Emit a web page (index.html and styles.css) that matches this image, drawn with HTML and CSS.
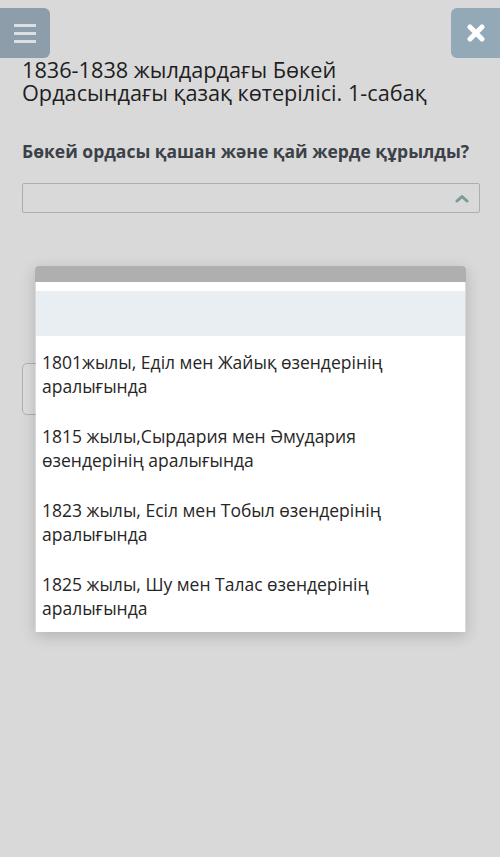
FILE: index.html
```html
<!DOCTYPE html>
<html lang="kk">
<head>
  <meta charset="UTF-8">
  <title>Бөкей ордасы</title>
  <link rel="stylesheet" href="styles.css">
</head>
<body>

<div class="topbar">
  <button class="menu-btn">
    <svg width="22" height="20" viewBox="0 0 22 20">
      <rect x="0" y="1" width="22" height="3" fill="#d9e0e5"/>
      <rect x="0" y="9" width="22" height="3" fill="#d9e0e5"/>
      <rect x="0" y="17" width="22" height="3" fill="#d9e0e5"/>
    </svg>
  </button>
  <button class="close-btn">
    <svg width="18" height="18" viewBox="0 0 18 18">
      <path d="M3 3 L15 15 M15 3 L3 15" stroke="#fff" stroke-width="5" stroke-linecap="round"/>
    </svg>
  </button>
</div>

<h1 class="title">1836-1838 жылдардағы Бөкей Ордасындағы қазақ көтерілісі. 1-сабақ</h1>

<div class="question">
  <h3>Бөкей ордасы қашан және қай жерде құрылды?</h3>
  <div class="select">
    <svg class="chevron" width="14" height="9" viewBox="0 0 14 9">
      <path d="M2 7 L7 2.5 L12 7" stroke="#7b9999" stroke-width="3" fill="none" stroke-linecap="round" stroke-linejoin="round"/>
    </svg>
  </div>
</div>

<div class="actions">
  <button class="next-btn"></button>
</div>

<!-- open list of answers -->
<div class="dropdown">
  <div class="dropdown-head"></div>
  <div class="dropdown-list">
    <div class="option selected"></div>
    <div class="option">1801жылы, Еділ мен Жайық өзендерінің аралығында</div>
    <div class="option">1815 жылы,Сырдария мен Әмудария өзендерінің аралығында</div>
    <div class="option">1823 жылы, Есіл мен Тобыл өзендерінің аралығында</div>
    <div class="option">1825 жылы, Шу мен Талас өзендерінің аралығында</div>
  </div>
</div>

</body>
</html>
```

FILE: styles.css
```css
body {
  font-family: "Open Sans", "Noto Sans", sans-serif;
  background-color: #d9d9d9;
  margin: 0;
  padding: 0;
  width: 500px;
  height: 857px;
  overflow: hidden;
  position: relative;
}

.topbar {
  display: flex;
  justify-content: space-between;
  padding-top: 8px;
}

.menu-btn, .close-btn {
  width: 50px;
  height: 50px;
  border: none;
  padding: 0;
  display: flex;
  align-items: center;
  justify-content: center;
}

.menu-btn {
  background-color: #8d9da9;
  border-radius: 0 6px 6px 0;
}

.close-btn {
  background-color: #93a9b7;
  border-radius: 6px 0 0 6px;
  width: 49px;
}

.title {
  margin: 0;
  padding: 0 22px;
  font-size: 21.7px;
  font-weight: normal;
  line-height: 23px;
  color: #1e1e1e;
  width: 440px;
}

.question {
  padding: 0 20px 0 22px;
}

.question h3 {
  margin: 36px 0 0;
  font-size: 17.5px;
  font-weight: bold;
  line-height: 22px;
  color: #3b4147;
  white-space: nowrap;
}

.select {
  margin-top: 21px;
  height: 28px;
  border: 1px solid #a8afb2;
  border-radius: 2px;
  display: flex;
  align-items: center;
  justify-content: flex-end;
  padding-right: 10px;
}

.actions {
  padding: 0 22px;
  margin-top: 150px;
}

.next-btn {
  width: 120px;
  height: 52px;
  background-color: #dcdcdc;
  border: 1px solid #b0b0b0;
  border-radius: 5px;
}

.dropdown {
  position: absolute;
  top: 266px;
  left: 35px;
  width: 431px;
  box-shadow: 0 4px 14px rgba(0, 0, 0, 0.18);
}

.dropdown-head {
  height: 16px;
  background-color: #afafaf;
  border-radius: 4px 4px 0 0;
}

.dropdown-list {
  background-color: #fff;
  padding-top: 9px;
  margin: 0 1px;
}

.option {
  padding: 14px 20px 12px 6px;
  font-size: 17.5px;
  line-height: 24px;
  color: #262626;
}

.option.selected {
  background-color: #e8eef1;
  height: 45px;
  padding: 0;
}
```
